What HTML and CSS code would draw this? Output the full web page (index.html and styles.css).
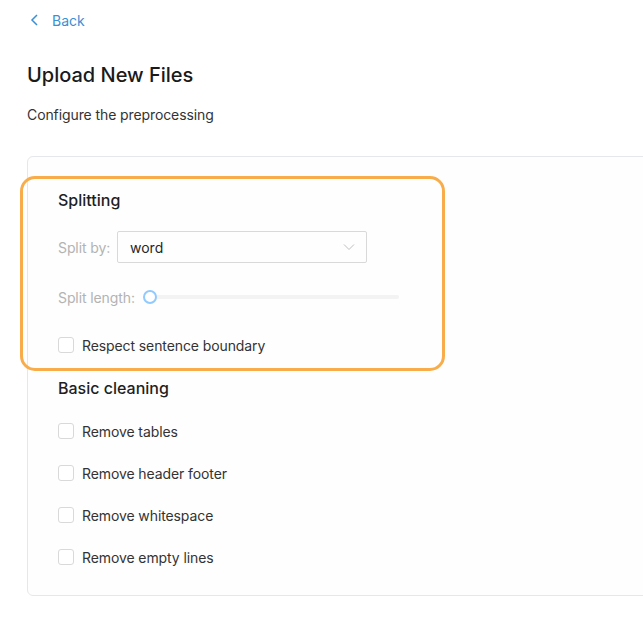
FILE: index.html
```html
<!DOCTYPE html>
<html>
<head>
<meta charset="utf-8">
<link rel="stylesheet" href="styles.css">
</head>
<body>
<div class="page">
  <a class="back">
    <svg class="back-icon" width="10" height="12" viewBox="0 0 10 12"><path d="M7 1 L2 6 L7 11" fill="none" stroke="currentColor" stroke-width="1.5"/></svg>
    <span>Back</span>
  </a>
  <h1 class="title">Upload New Files</h1>
  <p class="subtitle">Configure the preprocessing</p>
  <div class="card">
    <div class="highlight"></div>
    <h2 class="section-title">Splitting</h2>
    <div class="field-row select-row">
      <span class="field-label">Split by:</span>
      <div class="select">
        <span>word</span>
        <svg class="select-arrow" width="12" height="8" viewBox="0 0 12 8"><path d="M1 1.5 L6 6.5 L11 1.5" fill="none" stroke="currentColor" stroke-width="1"/></svg>
      </div>
    </div>
    <div class="field-row slider-row">
      <span class="field-label">Split length:</span>
      <div class="slider">
        <div class="track"></div>
        <div class="handle"></div>
      </div>
    </div>
    <label class="check-row first-check"><span class="box"></span><span>Respect sentence boundary</span></label>
    <h2 class="section-title cleaning">Basic cleaning</h2>
    <label class="check-row"><span class="box"></span><span>Remove tables</span></label>
    <label class="check-row"><span class="box"></span><span>Remove header footer</span></label>
    <label class="check-row"><span class="box"></span><span>Remove whitespace</span></label>
    <label class="check-row"><span class="box"></span><span>Remove empty lines</span></label>
  </div>
</div>
</body>
</html>
```

FILE: styles.css
```css
html, body {
  margin: 0;
  padding: 0;
  background: #ffffff;
  overflow: hidden;
}
body {
  font-family: Inter, "Noto Sans", sans-serif;
  color: #1f1f1f;
  font-size: 14px;
}
.page {
  padding: 9px 0 0 27px;
}
.back {
  display: flex;
  align-items: center;
  gap: 12px;
  height: 22px;
  color: #3a90d4;
  padding-left: 3px;
  font-size: 14px;
}
.back-icon {
  display: block;
}
.title {
  margin: 30px 0 0 0;
  font-size: 20px;
  font-weight: 500;
  line-height: 28px;
  color: #1a1a1a;
}
.subtitle {
  margin: 16px 0 0 0;
  font-size: 14px;
  line-height: 20px;
  color: #333;
  letter-spacing: -0.1px;
}
.card {
  position: relative;
  margin-top: 31px;
  width: 700px;
  box-sizing: border-box;
  border: 1px solid #e6e7eb;
  border-radius: 6px;
  background: #fefefe;
  padding: 31px 0 27px 30px;
  display: flex;
  flex-direction: column;
}
.highlight {
  position: absolute;
  left: -8px;
  top: 19px;
  width: 425px;
  height: 195px;
  box-sizing: border-box;
  border: 3px solid #f8ad4a;
  border-radius: 15px;
  pointer-events: none;
}
.section-title {
  margin: 0;
  font-size: 16px;
  font-weight: 500;
  line-height: 24px;
  color: #1f1f1f;
}
.section-title.cleaning {
  margin-top: 20px;
}
.field-row {
  display: flex;
  align-items: center;
}
.field-label {
  color: #b3b3b3;
  font-size: 14px;
  letter-spacing: -0.1px;
}
.select-row {
  margin-top: 19px;
  height: 32px;
}
.select-row .field-label {
  width: 59px;
}
.select {
  width: 250px;
  height: 32px;
  box-sizing: border-box;
  border: 1px solid #d9d9d9;
  border-radius: 2px;
  display: flex;
  align-items: center;
  justify-content: space-between;
  padding: 0 11px 0 12px;
  color: #262626;
}
.select-arrow {
  color: #bfbfbf;
}
.slider-row {
  margin-top: 23px;
  height: 22px;
}
.slider {
  position: relative;
  margin-left: 8px;
  width: 256px;
  height: 22px;
}
.track {
  position: absolute;
  left: 6px;
  right: 0;
  top: 9px;
  height: 4px;
  border-radius: 2px;
  background: #f3f3f3;
}
.handle {
  position: absolute;
  left: 0;
  top: 4px;
  width: 14px;
  height: 14px;
  box-sizing: border-box;
  border: 2px solid #91caff;
  border-radius: 50%;
  background: #fff;
}
.check-row {
  display: flex;
  align-items: center;
  gap: 8px;
  height: 22px;
  margin-top: 20px;
  color: #333;
  font-size: 14px;
  letter-spacing: -0.1px;
}
.check-row.first-check {
  margin-top: 26px;
}
.box {
  width: 16px;
  height: 16px;
  box-sizing: border-box;
  border: 1px solid #d9d9d9;
  border-radius: 3px;
  background: #fff;
}
```
